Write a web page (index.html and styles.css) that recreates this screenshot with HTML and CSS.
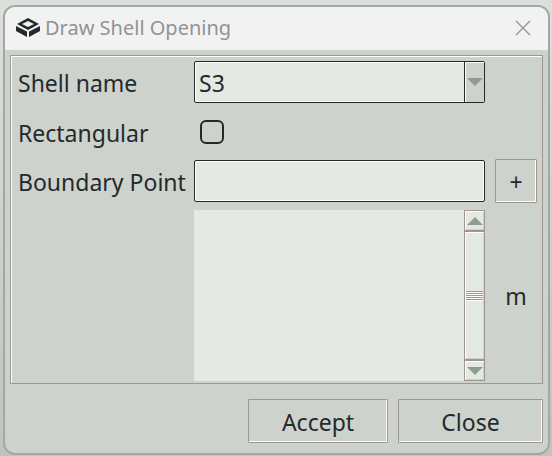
FILE: index.html
```html
<!DOCTYPE html>
<html lang="en">
  <head>
    <meta charset="UTF-8" />
    <meta name="viewport" content="width=device-width, initial-scale=1.0" />
    <title>Draw Shell Opening</title>
    <link rel="stylesheet" href="styles.css">
  </head>
  <body>
    <form class="dialog">
      <header class="titlebar">
        <svg class="logo" viewBox="0 0 24 19" aria-hidden="true">
          <path fill="#24292c" fill-rule="evenodd" d="M12 0 L23 6 L12 12 L1 6 Z M12 3 L6 6 L12 9 L18 6 Z" />
          <path fill="#24292c" d="M0 8 L11 13.500 V19 L0 13 Z M24 8 L13 13.500 V19 L24 13 Z" />
        </svg>
        <h1 class="title">Draw Shell Opening</h1>
        <button type="button" class="close-btn" aria-label="Close window">
          <svg viewBox="0 0 16 16" width="16" height="16"><path d="M1 1 L15 15 M15 1 L1 15" stroke="#949494" stroke-width="1.300" /></svg>
        </button>
      </header>

      <div class="panel">
        <label for="shell-name">Shell name</label>
        <div class="select-box">
          <select id="shell-name">
            <option>S3</option>
          </select>
          <span class="select-arrow"><svg viewBox="0 0 16 8" width="16" height="8"><path d="M0 0 H16 L8 8 Z" /></svg></span>
        </div>

        <label class="row-start" for="rectangular">Rectangular</label>
        <input type="checkbox" id="rectangular" class="check" />

        <label class="row-start" for="boundary-point">Boundary Point</label>
        <input type="text" id="boundary-point" class="field" />
        <button type="button" class="btn" aria-label="Add point">+</button>

        <div class="points">
          <textarea class="points-list" aria-label="Boundary points"></textarea>
          <div class="scrollbar">
            <button type="button" class="scroll-btn" aria-label="Scroll up"><svg viewBox="0 0 16 8" width="16" height="8"><path d="M8 0 L16 8 H0 Z" /></svg></button>
            <div class="thumb"><span class="grip"></span></div>
            <button type="button" class="scroll-btn" aria-label="Scroll down"><svg viewBox="0 0 16 8" width="16" height="8"><path d="M0 0 H16 L8 8 Z" /></svg></button>
          </div>
        </div>
        <span class="unit">m</span>
      </div>

      <footer class="actions">
        <button type="submit" class="btn">Accept</button>
        <button type="button" class="btn">Close</button>
      </footer>
    </form>
  </body>
</html>
```
FILE: styles.css
```css
* {
  box-sizing: border-box;
}

body {
  margin: 0;
  min-height: 100vh;
  padding: 5px 2px 1px 3px;
  background: linear-gradient(#dbe1da, #c0c3bf);
  font-family: "Noto Sans", "Open Sans", sans-serif;
  font-size: 23px;
  line-height: 32px;
  color: #24292c;
}

button,
input,
select,
textarea {
  margin: 0;
  border-radius: 0;
  font: inherit;
  color: inherit;
}

svg {
  display: block;
}

.dialog {
  border: 2px solid #a4a8a4;
  border-radius: 12px;
  background-color: #cdd2cc;
  overflow: hidden;
}

.titlebar {
  display: flex;
  align-items: center;
  height: 43px;
  padding: 0 13px 2px 11px;
  background-color: #f2f2f2;
}

.logo {
  width: 24px;
  height: 19px;
}

.title {
  flex: 1;
  margin: 0 0 0 5px;
  font-size: 20px;
  font-weight: 400;
  color: #929292;
}

.close-btn {
  padding: 4px;
  border: none;
  background: none;
}

.panel {
  display: grid;
  grid-template-columns: 176px minmax(0, 1fr) 42px;
  grid-template-rows: 42px 57px 42px auto;
  align-items: center;
  margin: 5px 5px 0;
  padding: 5px 5px 2px 7px;
  border: 1px solid #9f968e;
  box-shadow: inset 1px 1px #fff;
}

label {
  padding-top: 2px;
}

.row-start {
  grid-column: 1;
}

.select-box,
.field,
.points {
  margin-right: 10px;
}

.select-box {
  display: flex;
  height: 42px;
  border: 1px solid #24292c;
  border-radius: 2px;
  background-color: #e4e9e3;
  box-shadow: inset 0 0 0 1px #fff;
}

.select-box select {
  flex: 1;
  min-width: 0;
  padding: 2px 4px 0;
  border: none;
  background: none;
  appearance: none;
}

.select-arrow {
  display: flex;
  align-items: center;
  justify-content: center;
  width: 20px;
  border-left: 1px solid #24292c;
  background-color: #cdd2cc;
  box-shadow: inset 1px 1px #fff;
}

.select-arrow path,
.scroll-btn path {
  fill: #909b90;
}

.check {
  width: 24px;
  height: 24px;
  margin-left: 6px;
  border: 2px solid #24292c;
  border-radius: 6px;
  appearance: none;
}

.check:checked {
  background-color: #24292c;
}

.field {
  height: 42px;
  padding: 0 5px;
  border: 1px solid #24292c;
  border-radius: 2px;
  background-color: #e4e9e3;
  box-shadow: inset 0 0 0 1px #fff;
}

.btn {
  height: 44px;
  padding: 2px 0 0;
  border: 1px solid #9f968e;
  border-radius: 1px;
  background-color: #cdd2cc;
  box-shadow: inset -1px -1px #fff;
}

.points {
  grid-column: 2;
  display: flex;
  height: 171px;
  margin-top: 8px;
  background-color: #e4e9e3;
}

.points-list {
  flex: 1;
  min-width: 0;
  border: none;
  background: none;
  resize: none;
}

.scrollbar {
  display: flex;
  flex-direction: column;
  width: 21px;
  border: 1px solid #9f968e;
}

.scroll-btn {
  display: flex;
  align-items: center;
  justify-content: center;
  height: 19px;
  padding: 0;
  border: none;
  background-color: #e4e9e3;
  box-shadow: inset 1px 1px #fff, inset -1px -1px #cdd2cc;
}

.thumb {
  display: flex;
  flex: 1;
  align-items: center;
  border: solid #9f968e;
  border-width: 2px 0;
  box-shadow: inset 1px 1px #fff, inset -1px -1px #cdd2cc;
}

.grip {
  flex: 1;
  height: 10px;
  margin: 0 1px;
  background: repeating-linear-gradient(#9f968e 0 1px, #fff 1px 2px);
}

.unit {
  padding-top: 8px;
  text-align: center;
}

.actions {
  display: grid;
  grid-template-columns: 140px 145px;
  justify-content: end;
  gap: 10px;
  padding: 15px 5px 10px;
}
```
